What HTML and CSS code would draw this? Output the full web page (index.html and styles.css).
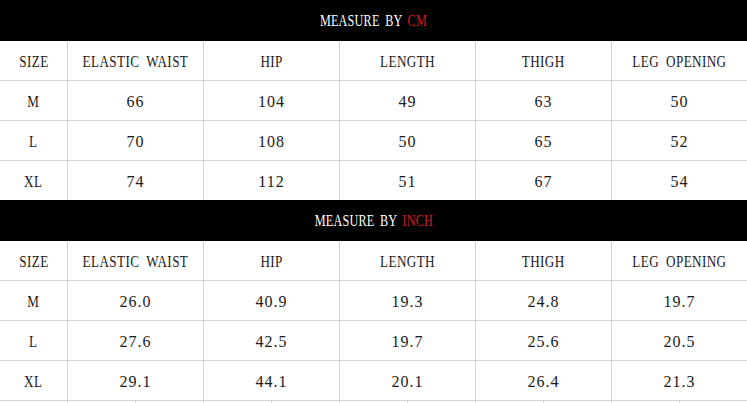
FILE: index.html
```html
<!DOCTYPE html>
<html>
<head>
<meta charset="utf-8">
<link rel="stylesheet" href="styles.css">
</head>
<body>
<div class="page">
  <div class="bar"><span class="t title">MEASURE BY <span class="unit">CM</span></span></div>
  <div class="grid">
    <div class="cell"><span class="t">SIZE</span></div><div class="cell"><span class="t">ELASTIC WAIST</span></div><div class="cell"><span class="t">HIP</span></div><div class="cell"><span class="t">LENGTH</span></div><div class="cell"><span class="t">THIGH</span></div><div class="cell"><span class="t">LEG OPENING</span></div>
    <div class="cell"><span class="t">M</span></div><div class="cell">66</div><div class="cell">104</div><div class="cell">49</div><div class="cell">63</div><div class="cell">50</div>
    <div class="cell"><span class="t">L</span></div><div class="cell">70</div><div class="cell">108</div><div class="cell">50</div><div class="cell">65</div><div class="cell">52</div>
    <div class="cell last"><span class="t">XL</span></div><div class="cell last">74</div><div class="cell last">112</div><div class="cell last">51</div><div class="cell last">67</div><div class="cell last">54</div>
  </div>
  <div class="bar"><span class="t title">MEASURE BY <span class="unit">INCH</span></span></div>
  <div class="grid">
    <div class="cell"><span class="t">SIZE</span></div><div class="cell"><span class="t">ELASTIC WAIST</span></div><div class="cell"><span class="t">HIP</span></div><div class="cell"><span class="t">LENGTH</span></div><div class="cell"><span class="t">THIGH</span></div><div class="cell"><span class="t">LEG OPENING</span></div>
    <div class="cell"><span class="t">M</span></div><div class="cell">26.0</div><div class="cell">40.9</div><div class="cell">19.3</div><div class="cell">24.8</div><div class="cell">19.7</div>
    <div class="cell"><span class="t">L</span></div><div class="cell">27.6</div><div class="cell">42.5</div><div class="cell">19.7</div><div class="cell">25.6</div><div class="cell">20.5</div>
    <div class="cell"><span class="t">XL</span></div><div class="cell">29.1</div><div class="cell">44.1</div><div class="cell">20.1</div><div class="cell">26.4</div><div class="cell">21.3</div>
  </div>
  <div class="sliver">
    <div></div><div></div><div></div><div></div><div></div><div></div><div></div><div></div><div></div><div></div><div></div>
  </div>
</div>
</body>
</html>
```
FILE: styles.css
```css
html, body {
  margin: 0;
  padding: 0;
  background: #ffffff;
}
.page {
  width: 747px;
  height: 403px;
  overflow: hidden;
  font-family: "Liberation Serif", "DejaVu Serif", serif;
  font-size: 16px;
  letter-spacing: 1px;
  color: #1a1a1a;
}
.t {
  display: inline-block;
  transform: scaleX(0.82);
  letter-spacing: 0.5px;
  word-spacing: 4px;
}
.t.title {
  transform: scaleX(0.76);
  letter-spacing: 0.3px;
  word-spacing: 3px;
}
.bar {
  height: 41px;
  background: #000;
  color: #fff;
  display: flex;
  align-items: center;
  justify-content: center;
  white-space: pre;
  padding-top: 1px;
  box-sizing: border-box;
}
.unit {
  color: #d11f1f;
}
.grid {
  display: grid;
  grid-template-columns: 68px 136px 136px 136px 136px 135px;
}
.cell {
  border-bottom: 1px solid #d3d3d3;
  border-right: 1px solid #d3d3d3;
  display: flex;
  align-items: center;
  justify-content: center;
  padding-top: 2px;
  height: 37px;
  white-space: pre;
}
.cell:nth-child(6n) {
  border-right: none;
}
.cell.last {
  border-bottom: none;
}
.sliver {
  display: grid;
  grid-template-columns: repeat(10, 68px) 67px;
  height: 2px;
}
.sliver div {
  border-right: 1px solid #d3d3d3;
}
.sliver div:last-child {
  border-right: none;
}
```
